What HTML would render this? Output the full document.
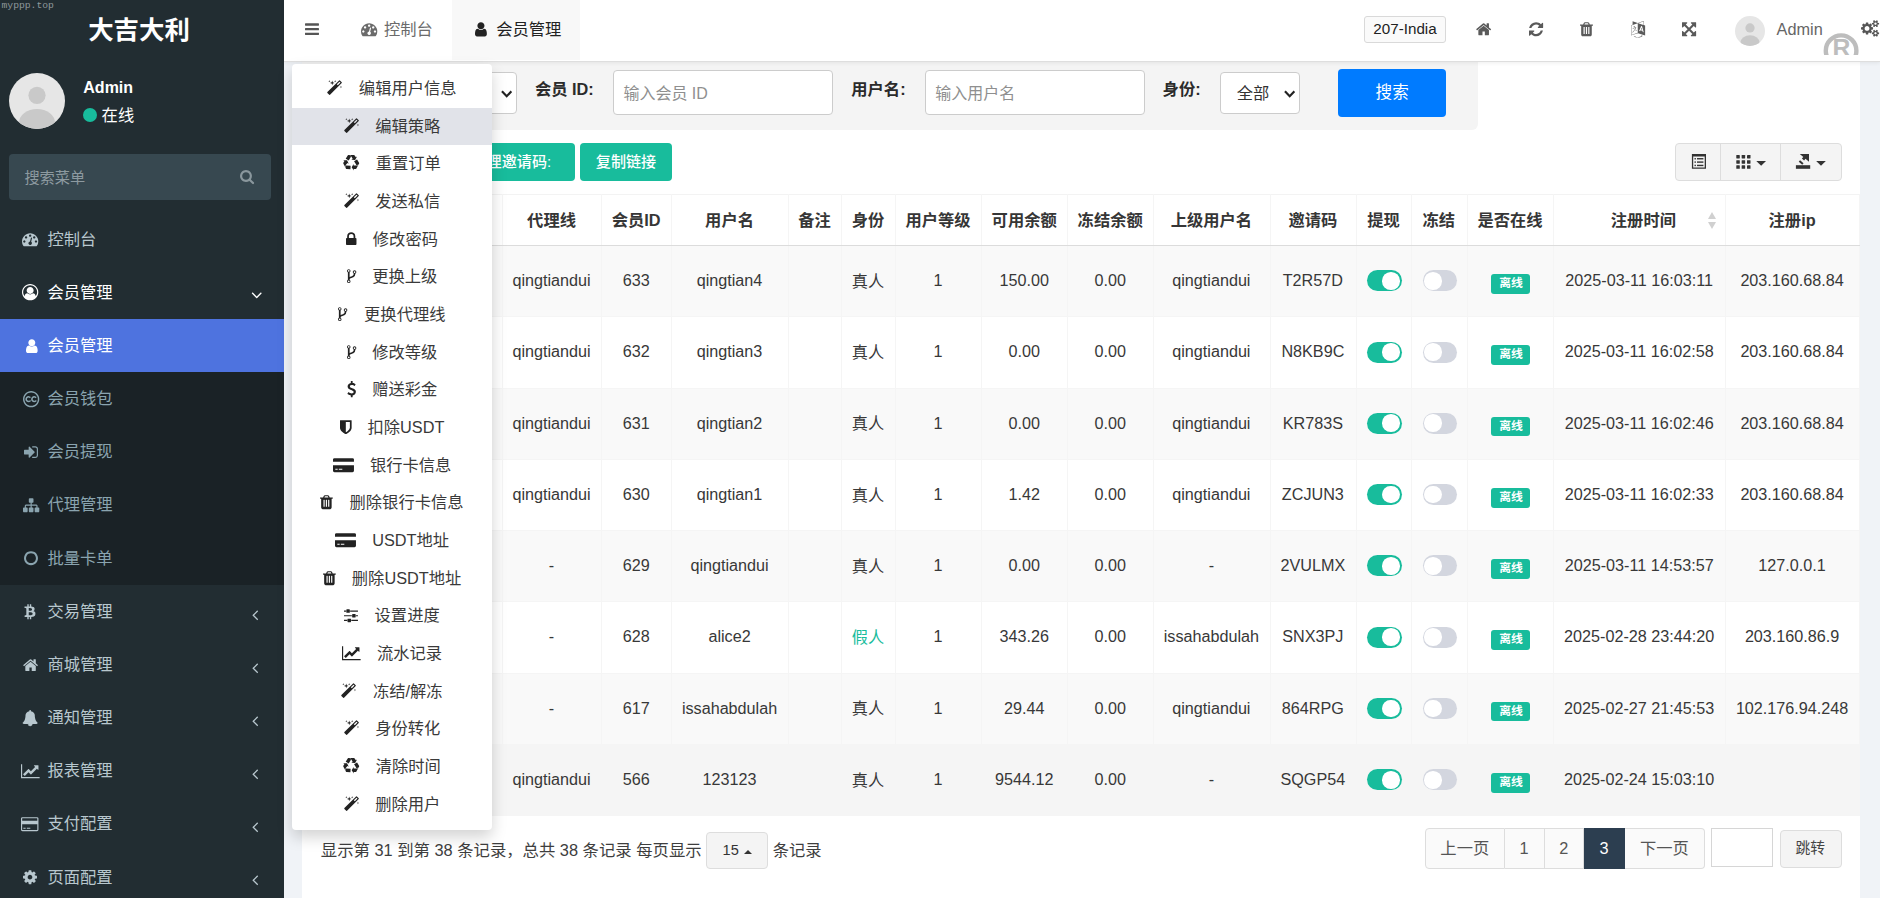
<!DOCTYPE html>
<html lang="zh-CN"><head><meta charset="utf-8"><title>大吉大利</title>
<style>
*{box-sizing:border-box}
html,body{margin:0;padding:0}
body{width:1880px;height:898px;overflow:hidden;position:relative;background:#f0f3f7;
 font-family:"Liberation Sans","Noto Sans CJK SC",sans-serif;font-size:16.3px;color:#333}
.fa{display:inline-block;fill:currentColor;overflow:visible}
ul{list-style:none;margin:0;padding:0}

/* sidebar */
#side{position:absolute;left:0;top:0;width:284px;height:898px;background:#222d32;overflow:hidden}
.wm{position:absolute;left:1.5px;top:-1px;font-family:"Liberation Mono",monospace;font-size:9.7px;line-height:14px;color:#8e979b;letter-spacing:0}
.logo{position:absolute;left:0;top:1.2px;width:278px;height:60px;line-height:59px;text-align:center;color:#fff;font-weight:bold;font-size:25.4px}
.avatar{position:absolute;left:9px;top:73px;width:56px;height:56px;border-radius:50%;overflow:hidden}
.avatar svg,.avatar2 svg{display:block}
.uname{position:absolute;left:83.3px;top:77.3px;line-height:22px;font-size:16px;font-weight:bold;color:#fff}
.ustat{position:absolute;left:83px;top:104px;line-height:22px;font-size:16.3px;color:#fff;padding-left:18.6px}
.ustat .dot{position:absolute;left:0;top:4.2px;width:14px;height:14px;border-radius:50%;background:#18bc9c}
.sform{position:absolute;left:9px;top:154px;width:262px;height:46px;background:#374850;border-radius:4px;line-height:46px;
 font-size:15.2px;color:#8d9aa0}
.sform span{position:absolute;left:15.4px;top:0.8px}
.menu{position:absolute;left:0;top:0;width:284px}
.mi{position:absolute;left:0;width:284px;height:53.17px;line-height:53.17px;color:#b8c7ce;font-size:16.3px}
.mi .mt{position:absolute;left:47.4px;top:0;white-space:nowrap}
.mi.open{color:#fff}
.mi.sub{background:#1a2226;color:#8aa4af}
.mi.sub.act{background:#4e73df;color:#fff}

/* header */
#hdr{position:absolute;left:0;top:0;width:1880px;height:61px;z-index:5}
#hdr>*{position:absolute}
#hdr::before{content:"";position:absolute;left:284px;top:0;right:0;height:61px;background:#fff;border-bottom:1px solid #dedede;box-shadow:0 1px 4px rgba(0,0,0,.07)}
.tab{top:0;height:60px;line-height:59px;white-space:nowrap;font-size:16.3px;color:#6b6b6b}
.tab.t1{left:340px;width:112px;padding-left:20.6px}
.tab.t2{left:452px;width:127.7px;background:#f8f8f8;color:#222;padding-left:23.4px}
.site{left:1364.4px;top:16.4px;width:81.3px;height:26.2px;line-height:24.5px;border:1px solid #d9d9d9;border-radius:3px;background:#fafafa;
 font-size:15.2px;color:#222;text-align:center}
.avatar2{left:1734.5px;top:16px;width:30px;height:30px;border-radius:50%;overflow:hidden}
.hadmin{left:1776.6px;top:18px;line-height:22px;font-size:16.3px;color:#666}
.regmark{left:1821.4px;top:30.85px}

/* panel */
#panel{position:absolute;left:302.4px;top:61px;width:1557.6px;height:837px;background:#fff}
#panel>*{position:absolute}
#panel{left:0;top:0;width:1880px;height:898px;background:none}
#panel::before{content:"";position:absolute;left:302.4px;top:61px;width:1557.6px;height:837px;background:#fff}
.band{left:302.4px;top:61px;width:1175.6px;height:69px;background:#f4f4f4;border-radius:0 0 6px 0}
.lb{top:78px;line-height:22px;font-weight:bold;font-size:16.3px;color:#2b2b2b;white-space:nowrap}
.inp{top:70.3px;width:219.4px;height:44.3px;border:1px solid #ccc;border-radius:4px;background:#fff;line-height:42px;font-size:16px;color:#8f8f8f}
.inp span{position:absolute;left:9px;top:1.3px;white-space:nowrap}
.sel{border:1px solid #ccc;border-radius:4px;background:#fff;font-size:16.3px;color:#333}
.sel.s0{left:322px;top:72.4px;width:194.8px;height:41.2px}
.sel.s1{left:1220.2px;top:72.4px;width:79.6px;height:41.2px;line-height:40.4px}
.sel span{position:absolute;left:15.5px;top:0}
.chev{position:absolute;right:3.9px;top:16.3px;width:11.4px;height:8px}
.btn-search{left:1337.9px;top:68.8px;width:108.5px;height:48.3px;line-height:48.6px;background:#007bff;border-radius:4px;color:#fff;text-align:center;font-size:16.6px}
.tbtn{top:143.3px;height:37.7px;line-height:37.8px;background:#18bc9c;border-radius:4px;color:#fff;text-align:center;font-size:15.1px;font-weight:500;white-space:nowrap;overflow:hidden}
.bgrp{left:1675.2px;top:143.1px;width:166.4px;height:37.5px;background:#f4f4f4;border:1px solid #ddd;border-radius:4px}
.bgrp div{position:absolute;top:0;bottom:0;width:1px;background:#ddd}
.bgrp .bg1{left:43.6px}
.bgrp .bg2{left:103.6px}
.caret{display:block;width:0;height:0;border-left:4.9px solid transparent;border-right:4.9px solid transparent;border-top:4.9px solid #333}
.caretup{display:inline-block;width:0;height:0;border-left:4.4px solid transparent;border-right:4.4px solid transparent;border-bottom:4.6px solid #333}

/* table */
.tb{left:322px;top:194px;width:1537px;table-layout:fixed;border-collapse:collapse;border-spacing:0;font-size:16.3px;color:#333}
.tb th,.tb td{padding:0 1.2px 0 0;text-align:center;white-space:nowrap;overflow:hidden;border-left:1px solid #f5f5f5;border-right:1px solid #f5f5f5}
.tb th{height:51px;padding-bottom:2.6px;font-weight:bold;border-top:1px solid #f3f3f3;border-bottom:1px solid #dcdcdc;color:#363636;position:relative;vertical-align:middle}
.tb td{height:71.29px;padding-bottom:1.4px;font-size:16.18px;color:#383838;border-top:1px solid #f5f5f5;vertical-align:middle}
.tb tr.odd td{background:#f9f9f9}
.tb tr.hov td{background:#f5f5f5;border-left-color:#f5f5f5;border-right-color:#f5f5f5}
.fake{color:#18bc9c}
.sw{left:1px;display:inline-block;position:relative;width:34.2px;height:21px;border-radius:11px;vertical-align:middle;top:0.2px}
.sw::after{content:"";position:absolute;top:1.7px;width:17.6px;height:17.6px;border-radius:50%;background:#fff}
.sw.on{background:#18bc9c}
.sw.on::after{right:1.7px}
.sw.off{background:#d3d6df}
.sw.off::after{left:1.7px}
.badge{left:1px;display:inline-block;position:relative;top:3px;width:39px;height:19.7px;line-height:19px;border-radius:3px;background:#18bc9c;color:#fff;font-weight:bold;font-size:11.8px;vertical-align:middle}
.srt{position:absolute;right:7px;top:17px;width:10px;height:17px}
.srt b{position:absolute;left:0;width:0;height:0;border-left:4.7px solid transparent;border-right:4.7px solid transparent}
.srt .u{top:0;border-bottom:7px solid #d0d0d0}
.srt .d{top:9.5px;border-top:7px solid #d0d0d0}

/* pagination */
.pinfo,.pinfo2{top:838.5px;line-height:22px;font-size:16.3px;color:#3e3e3e;white-space:nowrap}
.pinfo{left:320.8px;font-size:16.38px}
.pinfo2{left:772.8px}
.psize{left:706px;top:832.3px;width:62.3px;height:36.7px;line-height:35px;background:#f4f4f4;border:1px solid #ddd;border-radius:4px;font-size:14.6px;color:#333;text-align:center}
.psize span{margin-right:5px}
.psize .caretup{position:relative;top:-1.5px}
.pg{left:1425px;top:828.4px;height:40.3px;display:flex}
.pi{display:block;height:40.3px;line-height:38.5px;text-align:center;background:#fafafa;border:1px solid #ddd;border-left-width:0;color:#555;font-size:16.3px}
.pi.first{border-left-width:1px;border-radius:4px 0 0 4px}
.pi.last{border-radius:0 4px 4px 0}
.pi.act{background:#2c3e50;border-color:#2c3e50;color:#fff}
.jump{left:1711px;top:827.9px;width:61.7px;height:38.8px;border:1px solid #d6d6d6;background:#fff}
.jbtn{left:1780.4px;top:830.4px;width:61.3px;height:37.4px;line-height:35.5px;border:1px solid #ddd;border-radius:4px;background:#f4f4f4;color:#444;font-size:14.8px;text-align:center;text-indent:-1.6px}

/* dropdown */
#dd{z-index:10;position:absolute;left:292px;top:64px;width:200px;height:765.7px;padding:6px 0;background:#fff;border-radius:4px;
 box-shadow:0 7px 14.5px rgba(0,0,0,.175);border:0 solid rgba(0,0,0,.1)}
#dd li{height:37.68px;line-height:37.68px;text-align:center;white-space:nowrap;color:#3a3a3a;font-size:16.3px}
#dd li .fa{fill:#222}
#dd li.hv{background:#e1e3e9}

.gicons{left:1675px;top:143px}

.cj{position:relative;top:-0.7px}

</style></head>
<body>
<div id="side">
<div class="wm">myppp.top</div>
<div class="logo">大吉大利</div>
<div class="avatar"><svg viewBox="0 0 56 56" width="56" height="56"><rect width="56" height="56" fill="#e6e6e6"/><circle cx="28" cy="22.3" r="8.6" fill="#c9c9c9"/><ellipse cx="28" cy="50" rx="18" ry="14" fill="#c9c9c9"/></svg></div>
<div class="uname">Admin</div>
<div class="ustat"><i class="dot"></i>在线</div>
<div class="sform"><span>搜索菜单</span><svg class="fa" viewBox="0 0 1664 1792" style="width:14.11px;height:15.20px;position:absolute;left:231px;top:15.2px;fill:#8a979d"><path transform="translate(0,1536) scale(1,-1)" d="M1152 704q0 185 -131.5 316.5t-316.5 131.5t-316.5 -131.5t-131.5 -316.5t131.5 -316.5t316.5 -131.5t316.5 131.5t131.5 316.5zM1664 -128q0 -52 -38 -90t-90 -38q-54 0 -90 38l-343 342q-179 -124 -399 -124q-143 0 -273.5 55.5t-225 150t-150 225t-55.5 273.5
t55.5 273.5t150 225t225 150t273.5 55.5t273.5 -55.5t225 -150t150 -225t55.5 -273.5q0 -220 -124 -399l343 -343q37 -37 37 -90z"/></svg></div>
<ul class="menu">
<li class="mi top" style="top:212.50px"><svg class="fa" viewBox="0 0 1792 1792" style="width:16.30px;height:16.30px;position:absolute;left:22.05px;top:18.74px"><path transform="translate(0,1536) scale(1,-1)" d="M384 384q0 53 -37.5 90.5t-90.5 37.5t-90.5 -37.5t-37.5 -90.5t37.5 -90.5t90.5 -37.5t90.5 37.5t37.5 90.5zM576 832q0 53 -37.5 90.5t-90.5 37.5t-90.5 -37.5t-37.5 -90.5t37.5 -90.5t90.5 -37.5t90.5 37.5t37.5 90.5zM1004 351l101 382q6 26 -7.5 48.5t-38.5 29.5
t-48 -6.5t-30 -39.5l-101 -382q-60 -5 -107 -43.5t-63 -98.5q-20 -77 20 -146t117 -89t146 20t89 117q16 60 -6 117t-72 91zM1664 384q0 53 -37.5 90.5t-90.5 37.5t-90.5 -37.5t-37.5 -90.5t37.5 -90.5t90.5 -37.5t90.5 37.5t37.5 90.5zM1024 1024q0 53 -37.5 90.5
t-90.5 37.5t-90.5 -37.5t-37.5 -90.5t37.5 -90.5t90.5 -37.5t90.5 37.5t37.5 90.5zM1472 832q0 53 -37.5 90.5t-90.5 37.5t-90.5 -37.5t-37.5 -90.5t37.5 -90.5t90.5 -37.5t90.5 37.5t37.5 90.5zM1792 384q0 -261 -141 -483q-19 -29 -54 -29h-1402q-35 0 -54 29
q-141 221 -141 483q0 182 71 348t191 286t286 191t348 71t348 -71t286 -191t191 -286t71 -348z"/></svg><span class="mt">控制台</span></li>
<li class="mi top open" style="top:265.67px"><svg class="fa" viewBox="0 0 1792 1792" style="width:16.30px;height:16.30px;position:absolute;left:22.05px;top:18.74px"><path transform="translate(0,1536) scale(1,-1)" d="M896 1536q182 0 348 -71t286 -191t191 -286t71 -348q0 -181 -70.5 -347t-190.5 -286t-286 -191.5t-349 -71.5t-349 71t-285.5 191.5t-190.5 286t-71 347.5t71 348t191 286t286 191t348 71zM1515 185q149 205 149 455q0 156 -61 298t-164 245t-245 164t-298 61t-298 -61
t-245 -164t-164 -245t-61 -298q0 -250 149 -455q66 327 306 327q131 -128 313 -128t313 128q240 0 306 -327zM1280 832q0 159 -112.5 271.5t-271.5 112.5t-271.5 -112.5t-112.5 -271.5t112.5 -271.5t271.5 -112.5t271.5 112.5t112.5 271.5z"/></svg><span class="mt">会员管理</span><svg class="fa" viewBox="0 0 1152 1792" style="width:11.44px;height:17.80px;position:absolute;left:251.2px;top:20.29px"><path transform="translate(0,1536) scale(1,-1)" d="M1075 800q0 -13 -10 -23l-466 -466q-10 -10 -23 -10t-23 10l-466 466q-10 10 -10 23t10 23l50 50q10 10 23 10t23 -10l393 -393l393 393q10 10 23 10t23 -10l50 -50q10 -10 10 -23z"/></svg></li>
<li class="mi sub act" style="top:318.84px"><svg class="fa" viewBox="0 0 1280 1792" style="width:11.64px;height:16.30px;position:absolute;left:25.58px;top:18.74px"><path transform="translate(0,1536) scale(1,-1)" d="M1280 137q0 -109 -62.5 -187t-150.5 -78h-854q-88 0 -150.5 78t-62.5 187q0 85 8.5 160.5t31.5 152t58.5 131t94 89t134.5 34.5q131 -128 313 -128t313 128q76 0 134.5 -34.5t94 -89t58.5 -131t31.5 -152t8.5 -160.5zM1024 1024q0 -159 -112.5 -271.5t-271.5 -112.5
t-271.5 112.5t-112.5 271.5t112.5 271.5t271.5 112.5t271.5 -112.5t112.5 -271.5z"/></svg><span class="mt">会员管理</span></li>
<li class="mi sub" style="top:372.01px"><svg class="fa" viewBox="0 0 1792 1792" style="width:16.30px;height:16.30px;position:absolute;left:22.85px;top:18.74px"><path transform="translate(0,1536) scale(1,-1)" d="M605 303q153 0 257 104q14 18 3 36l-45 82q-6 13 -24 17q-16 2 -27 -11l-4 -3q-4 -4 -11.5 -10t-17.5 -13.5t-23.5 -14.5t-28.5 -13t-33.5 -9.5t-37.5 -3.5q-76 0 -125 50t-49 127q0 76 48 125.5t122 49.5q37 0 71.5 -14t50.5 -28l16 -14q11 -11 26 -10q16 2 24 14l53 78
q13 20 -2 39q-3 4 -11 12t-30 23.5t-48.5 28t-67.5 22.5t-86 10q-148 0 -246 -96.5t-98 -240.5q0 -146 97 -241.5t247 -95.5zM1235 303q153 0 257 104q14 18 4 36l-45 82q-8 14 -25 17q-16 2 -27 -11l-4 -3q-4 -4 -11.5 -10t-17.5 -13.5t-23.5 -14.5t-28.5 -13t-33.5 -9.5
t-37.5 -3.5q-76 0 -125 50t-49 127q0 76 48 125.5t122 49.5q37 0 71.5 -14t50.5 -28l16 -14q11 -11 26 -10q16 2 24 14l53 78q13 20 -2 39q-3 4 -11 12t-30 23.5t-48.5 28t-67.5 22.5t-86 10q-147 0 -245.5 -96.5t-98.5 -240.5q0 -146 97 -241.5t247 -95.5zM896 1376
q-150 0 -286 -58.5t-234.5 -157t-157 -234.5t-58.5 -286t58.5 -286t157 -234.5t234.5 -157t286 -58.5t286 58.5t234.5 157t157 234.5t58.5 286t-58.5 286t-157 234.5t-234.5 157t-286 58.5zM896 1536q182 0 348 -71t286 -191t191 -286t71 -348t-71 -348t-191 -286t-286 -191
t-348 -71t-348 71t-286 191t-191 286t-71 348t71 348t191 286t286 191t348 71z"/></svg><span class="mt">会员钱包</span></li>
<li class="mi sub" style="top:425.18px"><svg class="fa" viewBox="0 0 1536 1792" style="width:13.97px;height:16.30px;position:absolute;left:24.01px;top:18.74px"><path transform="translate(0,1536) scale(1,-1)" d="M1184 640q0 -26 -19 -45l-544 -544q-19 -19 -45 -19t-45 19t-19 45v288h-448q-26 0 -45 19t-19 45v384q0 26 19 45t45 19h448v288q0 26 19 45t45 19t45 -19l544 -544q19 -19 19 -45zM1536 992v-704q0 -119 -84.5 -203.5t-203.5 -84.5h-320q-13 0 -22.5 9.5t-9.5 22.5
q0 4 -1 20t-0.5 26.5t3 23.5t10 19.5t20.5 6.5h320q66 0 113 47t47 113v704q0 66 -47 113t-113 47h-288h-11h-13t-11.5 1t-11.5 3t-8 5.5t-7 9t-2 13.5q0 4 -1 20t-0.5 26.5t3 23.5t10 19.5t20.5 6.5h320q119 0 203.5 -84.5t84.5 -203.5z"/></svg><span class="mt">会员提现</span></li>
<li class="mi sub" style="top:478.35px"><svg class="fa" viewBox="0 0 1792 1792" style="width:16.30px;height:16.30px;position:absolute;left:22.85px;top:18.74px"><path transform="translate(0,1536) scale(1,-1)" d="M1792 288v-320q0 -40 -28 -68t-68 -28h-320q-40 0 -68 28t-28 68v320q0 40 28 68t68 28h96v192h-512v-192h96q40 0 68 -28t28 -68v-320q0 -40 -28 -68t-68 -28h-320q-40 0 -68 28t-28 68v320q0 40 28 68t68 28h96v192h-512v-192h96q40 0 68 -28t28 -68v-320
q0 -40 -28 -68t-68 -28h-320q-40 0 -68 28t-28 68v320q0 40 28 68t68 28h96v192q0 52 38 90t90 38h512v192h-96q-40 0 -68 28t-28 68v320q0 40 28 68t68 28h320q40 0 68 -28t28 -68v-320q0 -40 -28 -68t-68 -28h-96v-192h512q52 0 90 -38t38 -90v-192h96q40 0 68 -28t28 -68
z"/></svg><span class="mt">代理管理</span></li>
<li class="mi sub" style="top:531.52px"><svg class="fa" viewBox="0 0 1536 1792" style="width:13.97px;height:16.30px;position:absolute;left:24.01px;top:18.74px"><path transform="translate(0,1536) scale(1,-1)" d="M768 1184q-148 0 -273 -73t-198 -198t-73 -273t73 -273t198 -198t273 -73t273 73t198 198t73 273t-73 273t-198 198t-273 73zM1536 640q0 -209 -103 -385.5t-279.5 -279.5t-385.5 -103t-385.5 103t-279.5 279.5t-103 385.5t103 385.5t279.5 279.5t385.5 103t385.5 -103
t279.5 -279.5t103 -385.5z"/></svg><span class="mt">批量卡单</span></li>
<li class="mi top" style="top:584.69px"><svg class="fa" viewBox="0 0 1280 1792" style="width:11.64px;height:16.30px;position:absolute;left:24.38px;top:18.74px"><path transform="translate(0,1536) scale(1,-1)" d="M1167 896q18 -182 -131 -258q117 -28 175 -103t45 -214q-7 -71 -32.5 -125t-64.5 -89t-97 -58.5t-121.5 -34.5t-145.5 -15v-255h-154v251q-80 0 -122 1v-252h-154v255q-18 0 -54 0.5t-55 0.5h-200l31 183h111q50 0 58 51v402h16q-6 1 -16 1v287q-13 68 -89 68h-111v164
l212 -1q64 0 97 1v252h154v-247q82 2 122 2v245h154v-252q79 -7 140 -22.5t113 -45t82.5 -78t36.5 -114.5zM952 351q0 36 -15 64t-37 46t-57.5 30.5t-65.5 18.5t-74 9t-69 3t-64.5 -1t-47.5 -1v-338q8 0 37 -0.5t48 -0.5t53 1.5t58.5 4t57 8.5t55.5 14t47.5 21t39.5 30
t24.5 40t9.5 51zM881 827q0 33 -12.5 58.5t-30.5 42t-48 28t-55 16.5t-61.5 8t-58 2.5t-54 -1t-39.5 -0.5v-307q5 0 34.5 -0.5t46.5 0t50 2t55 5.5t51.5 11t48.5 18.5t37 27t27 38.5t9 51z"/></svg><span class="mt">交易管理</span><svg class="fa" viewBox="0 0 640 1792" style="width:6.21px;height:17.40px;position:absolute;left:252.36px;top:20.89px"><path transform="translate(0,1536) scale(1,-1)" d="M627 992q0 -13 -10 -23l-393 -393l393 -393q10 -10 10 -23t-10 -23l-50 -50q-10 -10 -23 -10t-23 10l-466 466q-10 10 -10 23t10 23l466 466q10 10 23 10t23 -10l50 -50q10 -10 10 -23z"/></svg></li>
<li class="mi top" style="top:637.86px"><svg class="fa" viewBox="0 0 1664 1792" style="width:15.14px;height:16.30px;position:absolute;left:22.63px;top:18.74px"><path transform="translate(0,1536) scale(1,-1)" d="M1408 544v-480q0 -26 -19 -45t-45 -19h-384v384h-256v-384h-384q-26 0 -45 19t-19 45v480q0 1 0.5 3t0.5 3l575 474l575 -474q1 -2 1 -6zM1631 613l-62 -74q-8 -9 -21 -11h-3q-13 0 -21 7l-692 577l-692 -577q-12 -8 -24 -7q-13 2 -21 11l-62 74q-8 10 -7 23.5t11 21.5
l719 599q32 26 76 26t76 -26l244 -204v195q0 14 9 23t23 9h192q14 0 23 -9t9 -23v-408l219 -182q10 -8 11 -21.5t-7 -23.5z"/></svg><span class="mt">商城管理</span><svg class="fa" viewBox="0 0 640 1792" style="width:6.21px;height:17.40px;position:absolute;left:252.36px;top:20.89px"><path transform="translate(0,1536) scale(1,-1)" d="M627 992q0 -13 -10 -23l-393 -393l393 -393q10 -10 10 -23t-10 -23l-50 -50q-10 -10 -23 -10t-23 10l-466 466q-10 10 -10 23t10 23l466 466q10 10 23 10t23 -10l50 -50q10 -10 10 -23z"/></svg></li>
<li class="mi top" style="top:691.03px"><svg class="fa" viewBox="0 0 1792 1792" style="width:16.30px;height:16.30px;position:absolute;left:22.05px;top:18.74px"><path transform="translate(0,1536) scale(1,-1)" d="M912 -160q0 16 -16 16q-59 0 -101.5 42.5t-42.5 101.5q0 16 -16 16t-16 -16q0 -73 51.5 -124.5t124.5 -51.5q16 0 16 16zM1728 128q0 -52 -38 -90t-90 -38h-448q0 -106 -75 -181t-181 -75t-181 75t-75 181h-448q-52 0 -90 38t-38 90q50 42 91 88t85 119.5t74.5 158.5
t50 206t19.5 260q0 152 117 282.5t307 158.5q-8 19 -8 39q0 40 28 68t68 28t68 -28t28 -68q0 -20 -8 -39q190 -28 307 -158.5t117 -282.5q0 -139 19.5 -260t50 -206t74.5 -158.5t85 -119.5t91 -88z"/></svg><span class="mt">通知管理</span><svg class="fa" viewBox="0 0 640 1792" style="width:6.21px;height:17.40px;position:absolute;left:252.36px;top:20.89px"><path transform="translate(0,1536) scale(1,-1)" d="M627 992q0 -13 -10 -23l-393 -393l393 -393q10 -10 10 -23t-10 -23l-50 -50q-10 -10 -23 -10t-23 10l-466 466q-10 10 -10 23t10 23l466 466q10 10 23 10t23 -10l50 -50q10 -10 10 -23z"/></svg></li>
<li class="mi top" style="top:744.20px"><svg class="fa" viewBox="0 0 2048 1792" style="width:18.63px;height:16.30px;position:absolute;left:20.89px;top:18.74px"><path transform="translate(0,1536) scale(1,-1)" d="M2048 0v-128h-2048v1536h128v-1408h1920zM1920 1248v-435q0 -21 -19.5 -29.5t-35.5 7.5l-121 121l-633 -633q-10 -10 -23 -10t-23 10l-233 233l-416 -416l-192 192l585 585q10 10 23 10t23 -10l233 -233l464 464l-121 121q-16 16 -7.5 35.5t29.5 19.5h435q14 0 23 -9
t9 -23z"/></svg><span class="mt">报表管理</span><svg class="fa" viewBox="0 0 640 1792" style="width:6.21px;height:17.40px;position:absolute;left:252.36px;top:20.89px"><path transform="translate(0,1536) scale(1,-1)" d="M627 992q0 -13 -10 -23l-393 -393l393 -393q10 -10 10 -23t-10 -23l-50 -50q-10 -10 -23 -10t-23 10l-466 466q-10 10 -10 23t10 23l466 466q10 10 23 10t23 -10l50 -50q10 -10 10 -23z"/></svg></li>
<li class="mi top" style="top:797.37px"><svg class="fa" viewBox="0 0 1920 1792" style="width:17.46px;height:16.30px;position:absolute;left:21.47px;top:18.74px"><path transform="translate(0,1536) scale(1,-1)" d="M1760 1408q66 0 113 -47t47 -113v-1216q0 -66 -47 -113t-113 -47h-1600q-66 0 -113 47t-47 113v1216q0 66 47 113t113 47h1600zM160 1280q-13 0 -22.5 -9.5t-9.5 -22.5v-224h1664v224q0 13 -9.5 22.5t-22.5 9.5h-1600zM1760 0q13 0 22.5 9.5t9.5 22.5v608h-1664v-608
q0 -13 9.5 -22.5t22.5 -9.5h1600zM256 128v128h256v-128h-256zM640 128v128h384v-128h-384z"/></svg><span class="mt">支付配置</span><svg class="fa" viewBox="0 0 640 1792" style="width:6.21px;height:17.40px;position:absolute;left:252.36px;top:20.89px"><path transform="translate(0,1536) scale(1,-1)" d="M627 992q0 -13 -10 -23l-393 -393l393 -393q10 -10 10 -23t-10 -23l-50 -50q-10 -10 -23 -10t-23 10l-466 466q-10 10 -10 23t10 23l466 466q10 10 23 10t23 -10l50 -50q10 -10 10 -23z"/></svg></li>
<li class="mi top" style="top:850.54px"><svg class="fa" viewBox="0 0 1536 1792" style="width:13.97px;height:16.30px;position:absolute;left:23.21px;top:18.74px"><path transform="translate(0,1536) scale(1,-1)" d="M1024 640q0 106 -75 181t-181 75t-181 -75t-75 -181t75 -181t181 -75t181 75t75 181zM1536 749v-222q0 -12 -8 -23t-20 -13l-185 -28q-19 -54 -39 -91q35 -50 107 -138q10 -12 10 -25t-9 -23q-27 -37 -99 -108t-94 -71q-12 0 -26 9l-138 108q-44 -23 -91 -38
q-16 -136 -29 -186q-7 -28 -36 -28h-222q-14 0 -24.5 8.5t-11.5 21.5l-28 184q-49 16 -90 37l-141 -107q-10 -9 -25 -9q-14 0 -25 11q-126 114 -165 168q-7 10 -7 23q0 12 8 23q15 21 51 66.5t54 70.5q-27 50 -41 99l-183 27q-13 2 -21 12.5t-8 23.5v222q0 12 8 23t19 13
l186 28q14 46 39 92q-40 57 -107 138q-10 12 -10 24q0 10 9 23q26 36 98.5 107.5t94.5 71.5q13 0 26 -10l138 -107q44 23 91 38q16 136 29 186q7 28 36 28h222q14 0 24.5 -8.5t11.5 -21.5l28 -184q49 -16 90 -37l142 107q9 9 24 9q13 0 25 -10q129 -119 165 -170q7 -8 7 -22
q0 -12 -8 -23q-15 -21 -51 -66.5t-54 -70.5q26 -50 41 -98l183 -28q13 -2 21 -12.5t8 -23.5z"/></svg><span class="mt">页面配置</span><svg class="fa" viewBox="0 0 640 1792" style="width:6.21px;height:17.40px;position:absolute;left:252.36px;top:20.89px"><path transform="translate(0,1536) scale(1,-1)" d="M627 992q0 -13 -10 -23l-393 -393l393 -393q10 -10 10 -23t-10 -23l-50 -50q-10 -10 -23 -10t-23 10l-466 466q-10 10 -10 23t10 23l466 466q10 10 23 10t23 -10l50 -50q10 -10 10 -23z"/></svg></li>
</ul>
</div>
<div id="hdr">
<svg class="fa" viewBox="0 0 1536 1792" style="width:13.97px;height:16.30px;position:absolute;left:304.66px;top:21.35px;fill:#555;"><path transform="translate(0,1536) scale(1,-1)" d="M1536 192v-128q0 -26 -19 -45t-45 -19h-1408q-26 0 -45 19t-19 45v128q0 26 19 45t45 19h1408q26 0 45 -19t19 -45zM1536 704v-128q0 -26 -19 -45t-45 -19h-1408q-26 0 -45 19t-19 45v128q0 26 19 45t45 19h1408q26 0 45 -19t19 -45zM1536 1216v-128q0 -26 -19 -45
t-45 -19h-1408q-26 0 -45 19t-19 45v128q0 26 19 45t45 19h1408q26 0 45 -19t19 -45z"/></svg><div class="tab t1"><svg class="fa" viewBox="0 0 1792 1792" style="width:16.30px;height:16.30px;vertical-align:-0.143em;margin-right:7px"><path transform="translate(0,1536) scale(1,-1)" d="M384 384q0 53 -37.5 90.5t-90.5 37.5t-90.5 -37.5t-37.5 -90.5t37.5 -90.5t90.5 -37.5t90.5 37.5t37.5 90.5zM576 832q0 53 -37.5 90.5t-90.5 37.5t-90.5 -37.5t-37.5 -90.5t37.5 -90.5t90.5 -37.5t90.5 37.5t37.5 90.5zM1004 351l101 382q6 26 -7.5 48.5t-38.5 29.5
t-48 -6.5t-30 -39.5l-101 -382q-60 -5 -107 -43.5t-63 -98.5q-20 -77 20 -146t117 -89t146 20t89 117q16 60 -6 117t-72 91zM1664 384q0 53 -37.5 90.5t-90.5 37.5t-90.5 -37.5t-37.5 -90.5t37.5 -90.5t90.5 -37.5t90.5 37.5t37.5 90.5zM1024 1024q0 53 -37.5 90.5
t-90.5 37.5t-90.5 -37.5t-37.5 -90.5t37.5 -90.5t90.5 -37.5t90.5 37.5t37.5 90.5zM1472 832q0 53 -37.5 90.5t-90.5 37.5t-90.5 -37.5t-37.5 -90.5t37.5 -90.5t90.5 -37.5t90.5 37.5t37.5 90.5zM1792 384q0 -261 -141 -483q-19 -29 -54 -29h-1402q-35 0 -54 29
q-141 221 -141 483q0 182 71 348t191 286t286 191t348 71t348 -71t286 -191t191 -286t71 -348z"/></svg><span>控制台</span></div>
<div class="tab t2"><svg class="fa" viewBox="0 0 1280 1792" style="width:11.86px;height:16.60px;vertical-align:-0.143em;margin-right:9px"><path transform="translate(0,1536) scale(1,-1)" d="M1280 137q0 -109 -62.5 -187t-150.5 -78h-854q-88 0 -150.5 78t-62.5 187q0 85 8.5 160.5t31.5 152t58.5 131t94 89t134.5 34.5q131 -128 313 -128t313 128q76 0 134.5 -34.5t94 -89t58.5 -131t31.5 -152t8.5 -160.5zM1024 1024q0 -159 -112.5 -271.5t-271.5 -112.5
t-271.5 112.5t-112.5 271.5t112.5 271.5t271.5 112.5t271.5 -112.5t112.5 -271.5z"/></svg><span>会员管理</span></div>
<div class="site">207-India</div>
<svg class="fa" viewBox="0 0 1664 1792" style="width:15.32px;height:16.50px;position:absolute;left:1476.34px;top:20.65px;fill:#5a5a5a;"><path transform="translate(0,1536) scale(1,-1)" d="M1408 544v-480q0 -26 -19 -45t-45 -19h-384v384h-256v-384h-384q-26 0 -45 19t-19 45v480q0 1 0.5 3t0.5 3l575 474l575 -474q1 -2 1 -6zM1631 613l-62 -74q-8 -9 -21 -11h-3q-13 0 -21 7l-692 577l-692 -577q-12 -8 -24 -7q-13 2 -21 11l-62 74q-8 10 -7 23.5t11 21.5
l719 599q32 26 76 26t76 -26l244 -204v195q0 14 9 23t23 9h192q14 0 23 -9t9 -23v-408l219 -182q10 -8 11 -21.5t-7 -23.5z"/></svg><svg class="fa" viewBox="0 0 1536 1792" style="width:14.14px;height:16.50px;position:absolute;left:1528.93px;top:20.65px;fill:#5a5a5a;"><path transform="translate(0,1536) scale(1,-1)" d="M1511 480q0 -5 -1 -7q-64 -268 -268 -434.5t-478 -166.5q-146 0 -282.5 55t-243.5 157l-129 -129q-19 -19 -45 -19t-45 19t-19 45v448q0 26 19 45t45 19h448q26 0 45 -19t19 -45t-19 -45l-137 -137q71 -66 161 -102t187 -36q134 0 250 65t186 179q11 17 53 117
q8 23 30 23h192q13 0 22.5 -9.5t9.5 -22.5zM1536 1280v-448q0 -26 -19 -45t-45 -19h-448q-26 0 -45 19t-19 45t19 45l138 138q-148 137 -349 137q-134 0 -250 -65t-186 -179q-11 -17 -53 -117q-8 -23 -30 -23h-199q-13 0 -22.5 9.5t-9.5 22.5v7q65 268 270 434.5t480 166.5
q146 0 284 -55.5t245 -156.5l130 129q19 19 45 19t45 -19t19 -45z"/></svg><svg class="fa" viewBox="0 0 1408 1792" style="width:12.96px;height:16.50px;position:absolute;left:1580.32px;top:20.65px;fill:#5a5a5a;"><path transform="translate(0,1536) scale(1,-1)" d="M512 160v704q0 14 -9 23t-23 9h-64q-14 0 -23 -9t-9 -23v-704q0 -14 9 -23t23 -9h64q14 0 23 9t9 23zM768 160v704q0 14 -9 23t-23 9h-64q-14 0 -23 -9t-9 -23v-704q0 -14 9 -23t23 -9h64q14 0 23 9t9 23zM1024 160v704q0 14 -9 23t-23 9h-64q-14 0 -23 -9t-9 -23v-704
q0 -14 9 -23t23 -9h64q14 0 23 9t9 23zM480 1152h448l-48 117q-7 9 -17 11h-317q-10 -2 -17 -11zM1408 1120v-64q0 -14 -9 -23t-23 -9h-96v-948q0 -83 -47 -143.5t-113 -60.5h-832q-66 0 -113 58.5t-47 141.5v952h-96q-14 0 -23 9t-9 23v64q0 14 9 23t23 9h309l70 167
q15 37 54 63t79 26h320q40 0 79 -26t54 -63l70 -167h309q14 0 23 -9t9 -23z"/></svg><svg class="fa" viewBox="0 0 1536 1792" style="width:14.14px;height:16.50px;position:absolute;left:1631.23px;top:20.65px;fill:#5a5a5a;"><path transform="translate(0,1536) scale(1,-1)" d="M654 458q-1 -3 -12.5 0.5t-31.5 11.5l-20 9q-44 20 -87 49q-7 5 -41 31.5t-38 28.5q-67 -103 -134 -181q-81 -95 -105 -110q-4 -2 -19.5 -4t-18.5 0q6 4 82 92q21 24 85.5 115t78.5 118q17 30 51 98.5t36 77.5q-8 1 -110 -33q-8 -2 -27.5 -7.5t-34.5 -9.5t-17 -5
q-2 -2 -2 -10.5t-1 -9.5q-5 -10 -31 -15q-23 -7 -47 0q-18 4 -28 21q-4 6 -5 23q6 2 24.5 5t29.5 6q58 16 105 32q100 35 102 35q10 2 43 19.5t44 21.5q9 3 21.5 8t14.5 5.5t6 -0.5q2 -12 -1 -33q0 -2 -12.5 -27t-26.5 -53.5t-17 -33.5q-25 -50 -77 -131l64 -28
q12 -6 74.5 -32t67.5 -28q4 -1 10.5 -25.5t4.5 -30.5zM449 944q3 -15 -4 -28q-12 -23 -50 -38q-30 -12 -60 -12q-26 3 -49 26q-14 15 -18 41l1 3q3 -3 19.5 -5t26.5 0t58 16q36 12 55 14q17 0 21 -17zM1147 815l63 -227l-139 42zM39 15l694 232v1032l-694 -233v-1031z
M1280 332l102 -31l-181 657l-100 31l-216 -536l102 -31l45 110l211 -65zM777 1294l573 -184v380zM1088 -29l158 -13l-54 -160l-40 66q-130 -83 -276 -108q-58 -12 -91 -12h-84q-79 0 -199.5 39t-183.5 85q-8 7 -8 16q0 8 5 13.5t13 5.5q4 0 18 -7.5t30.5 -16.5t20.5 -11
q73 -37 159.5 -61.5t157.5 -24.5q95 0 167 14.5t157 50.5q15 7 30.5 15.5t34 19t28.5 16.5zM1536 1050v-1079l-774 246q-14 -6 -375 -127.5t-368 -121.5q-13 0 -18 13q0 1 -1 3v1078q3 9 4 10q5 6 20 11q107 36 149 50v384l558 -198q2 0 160.5 55t316 108.5t161.5 53.5
q20 0 20 -21v-418z"/></svg><svg class="fa" viewBox="0 0 1536 1792" style="width:14.14px;height:16.50px;position:absolute;left:1681.93px;top:20.65px;fill:#5a5a5a;"><path transform="translate(0,1536) scale(1,-1)" d="M1283 995l-355 -355l355 -355l144 144q29 31 70 14q39 -17 39 -59v-448q0 -26 -19 -45t-45 -19h-448q-42 0 -59 40q-17 39 14 69l144 144l-355 355l-355 -355l144 -144q31 -30 14 -69q-17 -40 -59 -40h-448q-26 0 -45 19t-19 45v448q0 42 40 59q39 17 69 -14l144 -144
l355 355l-355 355l-144 -144q-19 -19 -45 -19q-12 0 -24 5q-40 17 -40 59v448q0 26 19 45t45 19h448q42 0 59 -40q17 -39 -14 -69l-144 -144l355 -355l355 355l-144 144q-31 30 -14 69q17 40 59 40h448q26 0 45 -19t19 -45v-448q0 -42 -39 -59q-13 -5 -25 -5q-26 0 -45 19z
"/></svg><div class="avatar2"><svg viewBox="0 0 56 56" width="30" height="30"><rect width="56" height="56" fill="#e6e6e6"/><circle cx="28" cy="22.3" r="8.6" fill="#c9c9c9"/><ellipse cx="28" cy="50" rx="18" ry="14" fill="#c9c9c9"/></svg></div>
<div class="hadmin">Admin</div>
<svg class="fa" viewBox="0 0 1920 1792" style="width:18.11px;height:16.90px;position:absolute;left:1860.6px;top:20.4px;fill:#555"><path transform="translate(0,1536) scale(1,-1)" d="M896 640q0 106 -75 181t-181 75t-181 -75t-75 -181t75 -181t181 -75t181 75t75 181zM1664 128q0 52 -38 90t-90 38t-90 -38t-38 -90q0 -53 37.5 -90.5t90.5 -37.5t90.5 37.5t37.5 90.5zM1664 1152q0 52 -38 90t-90 38t-90 -38t-38 -90q0 -53 37.5 -90.5t90.5 -37.5
t90.5 37.5t37.5 90.5zM1280 731v-185q0 -10 -7 -19.5t-16 -10.5l-155 -24q-11 -35 -32 -76q34 -48 90 -115q7 -11 7 -20q0 -12 -7 -19q-23 -30 -82.5 -89.5t-78.5 -59.5q-11 0 -21 7l-115 90q-37 -19 -77 -31q-11 -108 -23 -155q-7 -24 -30 -24h-186q-11 0 -20 7.5t-10 17.5
l-23 153q-34 10 -75 31l-118 -89q-7 -7 -20 -7q-11 0 -21 8q-144 133 -144 160q0 9 7 19q10 14 41 53t47 61q-23 44 -35 82l-152 24q-10 1 -17 9.5t-7 19.5v185q0 10 7 19.5t16 10.5l155 24q11 35 32 76q-34 48 -90 115q-7 11 -7 20q0 12 7 20q22 30 82 89t79 59q11 0 21 -7
l115 -90q34 18 77 32q11 108 23 154q7 24 30 24h186q11 0 20 -7.5t10 -17.5l23 -153q34 -10 75 -31l118 89q8 7 20 7q11 0 21 -8q144 -133 144 -160q0 -8 -7 -19q-12 -16 -42 -54t-45 -60q23 -48 34 -82l152 -23q10 -2 17 -10.5t7 -19.5zM1920 198v-140q0 -16 -149 -31
q-12 -27 -30 -52q51 -113 51 -138q0 -4 -4 -7q-122 -71 -124 -71q-8 0 -46 47t-52 68q-20 -2 -30 -2t-30 2q-14 -21 -52 -68t-46 -47q-2 0 -124 71q-4 3 -4 7q0 25 51 138q-18 25 -30 52q-149 15 -149 31v140q0 16 149 31q13 29 30 52q-51 113 -51 138q0 4 4 7q4 2 35 20
t59 34t30 16q8 0 46 -46.5t52 -67.5q20 2 30 2t30 -2q51 71 92 112l6 2q4 0 124 -70q4 -3 4 -7q0 -25 -51 -138q17 -23 30 -52q149 -15 149 -31zM1920 1222v-140q0 -16 -149 -31q-12 -27 -30 -52q51 -113 51 -138q0 -4 -4 -7q-122 -71 -124 -71q-8 0 -46 47t-52 68
q-20 -2 -30 -2t-30 2q-14 -21 -52 -68t-46 -47q-2 0 -124 71q-4 3 -4 7q0 25 51 138q-18 25 -30 52q-149 15 -149 31v140q0 16 149 31q13 29 30 52q-51 113 -51 138q0 4 4 7q4 2 35 20t59 34t30 16q8 0 46 -46.5t52 -67.5q20 2 30 2t30 -2q51 71 92 112l6 2q4 0 124 -70
q4 -3 4 -7q0 -25 -51 -138q17 -23 30 -52q149 -15 149 -31z"/></svg><svg class="regmark" viewBox="0 0 40 24" width="40" height="24"><circle cx="20.1" cy="19.65" r="15.3" fill="none" stroke="#bdbdbd" stroke-width="4.4"/><text x="20.3" y="25.3" text-anchor="middle" font-family="Liberation Sans, sans-serif" font-weight="bold" font-size="24.7" fill="#bdbdbd">R</text></svg>
</div>
<div id="panel">
<div class="band"></div>
<div class="sel s0"><svg class="chev" viewBox="0 0 12 8"><path d="M1 1.2 L6 6.3 L11 1.2" fill="none" stroke="#222" stroke-width="2.3"/></svg></div>
<label class="lb" style="left:535px">会员 ID:</label>
<div class="inp" style="left:613.4px"><span>输入会员 ID</span></div>
<label class="lb" style="left:851.3px">用户名:</label>
<div class="inp" style="left:925.3px"><span>输入用户名</span></div>
<label class="lb" style="left:1162.6px">身份:</label>
<div class="sel s1"><span>全部</span><svg class="chev" viewBox="0 0 12 8"><path d="M1 1.2 L6 6.3 L11 1.2" fill="none" stroke="#222" stroke-width="2.3"/></svg></div>
<div class="btn-search">搜索</div>
<div class="tbtn" style="left:322px;width:129px">&nbsp;</div>
<div class="tbtn" style="left:458.6px;width:116.2px;text-align:right;padding-right:0"><span style="margin-right:23.6px">代理邀请码:</span></div>
<div class="tbtn" style="left:580px;width:92px">复制链接</div>
<div class="bgrp"><div class="bg1"></div><div class="bg2"></div></div>
<svg class="gicons" viewBox="1675 143 167 38" width="167" height="38" fill="#333"><path fill-rule="evenodd" d="M1691.9 153.9h14.1v14.9h-14.1z M1693.2 156.5v11h11.5v-11z"/><rect x="1694.5" y="158.05" width="1.4" height="1.4"/><rect x="1697" y="158.05" width="6.4" height="1.4"/><rect x="1694.5" y="161.40" width="1.4" height="1.4"/><rect x="1697" y="161.40" width="6.4" height="1.4"/><rect x="1694.5" y="164.75" width="1.4" height="1.4"/><rect x="1697" y="164.75" width="6.4" height="1.4"/><rect x="1736.3" y="155.0" width="3.5" height="3.5" rx="0.4"/><rect x="1736.3" y="160.15" width="3.5" height="3.5" rx="0.4"/><rect x="1736.3" y="165.3" width="3.5" height="3.5" rx="0.4"/><rect x="1741.65" y="155.0" width="3.5" height="3.5" rx="0.4"/><rect x="1741.65" y="160.15" width="3.5" height="3.5" rx="0.4"/><rect x="1741.65" y="165.3" width="3.5" height="3.5" rx="0.4"/><rect x="1747.0" y="155.0" width="3.5" height="3.5" rx="0.4"/><rect x="1747.0" y="160.15" width="3.5" height="3.5" rx="0.4"/><rect x="1747.0" y="165.3" width="3.5" height="3.5" rx="0.4"/><path d="M1756.3 161h9.7l-4.85 4.8z"/><path d="M1816.2 161h9.6l-4.8 4.8z"/><rect x="1795.9" y="165.2" width="14.3" height="3.6"/><path d="M1799.8 153.9H1809V161.8L1805.5 158.8L1804.1 160.5L1801.9 158.6L1803.3 156.9Z"/><path d="M1798.75 161.66L1800.05 160.14L1803.55 163.14L1802.25 164.66Z"/></svg>
<table class="tb"><colgroup><col style="width:180.00px"><col style="width:99.25px"><col style="width:70.00px"><col style="width:116.75px"><col style="width:53.25px"><col style="width:53.75px"><col style="width:86.25px"><col style="width:86.05px"><col style="width:85.95px"><col style="width:116.45px"><col style="width:86.55px"><col style="width:54.65px"><col style="width:56.10px"><col style="width:86.20px"><col style="width:172.30px"><col style="width:133.50px"></colgroup>
<thead><tr><th></th><th>代理线</th><th>会员ID</th><th>用户名</th><th>备注</th><th>身份</th><th>用户等级</th><th>可用余额</th><th>冻结余额</th><th>上级用户名</th><th>邀请码</th><th>提现</th><th>冻结</th><th>是否在线</th><th class="sortable"><span style="position:relative;left:4.2px">注册时间</span><i class="srt"><b class="u"></b><b class="d"></b></i></th><th>注册ip</th></tr></thead>
<tbody>
<tr class="odd"><td></td><td>qingtiandui</td><td>633</td><td>qingtian4</td><td></td><td><span class="cj">真人</span></td><td>1</td><td>150.00</td><td>0.00</td><td>qingtiandui</td><td>T2R57D</td><td><i class="sw on"></i></td><td><i class="sw off"></i></td><td><span class="badge">离线</span></td><td>2025-03-11 16:03:11</td><td>203.160.68.84</td></tr>
<tr class="even"><td></td><td>qingtiandui</td><td>632</td><td>qingtian3</td><td></td><td><span class="cj">真人</span></td><td>1</td><td>0.00</td><td>0.00</td><td>qingtiandui</td><td>N8KB9C</td><td><i class="sw on"></i></td><td><i class="sw off"></i></td><td><span class="badge">离线</span></td><td>2025-03-11 16:02:58</td><td>203.160.68.84</td></tr>
<tr class="odd"><td></td><td>qingtiandui</td><td>631</td><td>qingtian2</td><td></td><td><span class="cj">真人</span></td><td>1</td><td>0.00</td><td>0.00</td><td>qingtiandui</td><td>KR783S</td><td><i class="sw on"></i></td><td><i class="sw off"></i></td><td><span class="badge">离线</span></td><td>2025-03-11 16:02:46</td><td>203.160.68.84</td></tr>
<tr class="even"><td></td><td>qingtiandui</td><td>630</td><td>qingtian1</td><td></td><td><span class="cj">真人</span></td><td>1</td><td>1.42</td><td>0.00</td><td>qingtiandui</td><td>ZCJUN3</td><td><i class="sw on"></i></td><td><i class="sw off"></i></td><td><span class="badge">离线</span></td><td>2025-03-11 16:02:33</td><td>203.160.68.84</td></tr>
<tr class="odd"><td></td><td>-</td><td>629</td><td>qingtiandui</td><td></td><td><span class="cj">真人</span></td><td>1</td><td>0.00</td><td>0.00</td><td>-</td><td>2VULMX</td><td><i class="sw on"></i></td><td><i class="sw off"></i></td><td><span class="badge">离线</span></td><td>2025-03-11 14:53:57</td><td>127.0.0.1</td></tr>
<tr class="even"><td></td><td>-</td><td>628</td><td>alice2</td><td></td><td><span class="fake cj">假人</span></td><td>1</td><td>343.26</td><td>0.00</td><td>issahabdulah</td><td>SNX3PJ</td><td><i class="sw on"></i></td><td><i class="sw off"></i></td><td><span class="badge">离线</span></td><td>2025-02-28 23:44:20</td><td>203.160.86.9</td></tr>
<tr class="odd"><td></td><td>-</td><td>617</td><td>issahabdulah</td><td></td><td><span class="cj">真人</span></td><td>1</td><td>29.44</td><td>0.00</td><td>qingtiandui</td><td>864RPG</td><td><i class="sw on"></i></td><td><i class="sw off"></i></td><td><span class="badge">离线</span></td><td>2025-02-27 21:45:53</td><td>102.176.94.248</td></tr>
<tr class="hov"><td></td><td>qingtiandui</td><td>566</td><td>123123</td><td></td><td><span class="cj">真人</span></td><td>1</td><td>9544.12</td><td>0.00</td><td>-</td><td>SQGP54</td><td><i class="sw on"></i></td><td><i class="sw off"></i></td><td><span class="badge">离线</span></td><td>2025-02-24 15:03:10</td><td></td></tr>
</tbody></table>
<div class="pinfo">显示第 31 到第 38 条记录，总共 38 条记录 每页显示</div>
<div class="psize"><span>15</span><i class="caretup"></i></div>
<div class="pinfo2">条记录</div>
<div class="pg"><span class="pi first" style="width:79.6px">上一页</span><span class="pi" style="width:40.1px">1</span><span class="pi" style="width:39.4px">2</span><span class="pi act" style="width:41px">3</span><span class="pi last" style="width:79.5px">下一页</span></div>
<div class="jump"></div>
<div class="jbtn">跳转</div>
</div>
<ul id="dd">
<li><svg class="fa" viewBox="0 0 1664 1792" style="width:15.14px;height:16.30px;vertical-align:-0.143em;margin-right:16.3px"><path transform="translate(0,1536) scale(1,-1)" d="M1190 955l293 293l-107 107l-293 -293zM1637 1248q0 -27 -18 -45l-1286 -1286q-18 -18 -45 -18t-45 18l-198 198q-18 18 -18 45t18 45l1286 1286q18 18 45 18t45 -18l198 -198q18 -18 18 -45zM286 1438l98 -30l-98 -30l-30 -98l-30 98l-98 30l98 30l30 98zM636 1276
l196 -60l-196 -60l-60 -196l-60 196l-196 60l196 60l60 196zM1566 798l98 -30l-98 -30l-30 -98l-30 98l-98 30l98 30l30 98zM926 1438l98 -30l-98 -30l-30 -98l-30 98l-98 30l98 30l30 98z"/></svg><span>编辑用户信息</span></li>
<li class="hv"><svg class="fa" viewBox="0 0 1664 1792" style="width:15.14px;height:16.30px;vertical-align:-0.143em;margin-right:16.3px"><path transform="translate(0,1536) scale(1,-1)" d="M1190 955l293 293l-107 107l-293 -293zM1637 1248q0 -27 -18 -45l-1286 -1286q-18 -18 -45 -18t-45 18l-198 198q-18 18 -18 45t18 45l1286 1286q18 18 45 18t45 -18l198 -198q18 -18 18 -45zM286 1438l98 -30l-98 -30l-30 -98l-30 98l-98 30l98 30l30 98zM636 1276
l196 -60l-196 -60l-60 -196l-60 196l-196 60l196 60l60 196zM1566 798l98 -30l-98 -30l-30 -98l-30 98l-98 30l98 30l30 98zM926 1438l98 -30l-98 -30l-30 -98l-30 98l-98 30l98 30l30 98z"/></svg><span>编辑策略</span></li>
<li><svg class="fa" viewBox="0 0 1792 1792" style="width:16.30px;height:16.30px;vertical-align:-0.143em;margin-right:16.3px"><path transform="translate(0,1536) scale(1,-1)" d="M836 367l-15 -368l-2 -22l-420 29q-36 3 -67 31.5t-47 65.5q-11 27 -14.5 55t4 65t12 55t21.5 64t19 53q78 -12 509 -28zM449 953l180 -379l-147 92q-63 -72 -111.5 -144.5t-72.5 -125t-39.5 -94.5t-18.5 -63l-4 -21l-190 357q-17 26 -18 56t6 47l8 18q35 63 114 188
l-140 86zM1680 436l-188 -359q-12 -29 -36.5 -46.5t-43.5 -20.5l-18 -4q-71 -7 -219 -12l8 -164l-230 367l211 362l7 -173q170 -16 283 -5t170 33zM895 1360q-47 -63 -265 -435l-317 187l-19 12l225 356q20 31 60 45t80 10q24 -2 48.5 -12t42 -21t41.5 -33t36 -34.5
t36 -39.5t32 -35zM1550 1053l212 -363q18 -37 12.5 -76t-27.5 -74q-13 -20 -33 -37t-38 -28t-48.5 -22t-47 -16t-51.5 -14t-46 -12q-34 72 -265 436l313 195zM1407 1279l142 83l-220 -373l-419 20l151 86q-34 89 -75 166t-75.5 123.5t-64.5 80t-47 46.5l-17 13l405 -1
q31 3 58 -10.5t39 -28.5l11 -15q39 -61 112 -190z"/></svg><span>重置订单</span></li>
<li><svg class="fa" viewBox="0 0 1664 1792" style="width:15.14px;height:16.30px;vertical-align:-0.143em;margin-right:16.3px"><path transform="translate(0,1536) scale(1,-1)" d="M1190 955l293 293l-107 107l-293 -293zM1637 1248q0 -27 -18 -45l-1286 -1286q-18 -18 -45 -18t-45 18l-198 198q-18 18 -18 45t18 45l1286 1286q18 18 45 18t45 -18l198 -198q18 -18 18 -45zM286 1438l98 -30l-98 -30l-30 -98l-30 98l-98 30l98 30l30 98zM636 1276
l196 -60l-196 -60l-60 -196l-60 196l-196 60l196 60l60 196zM1566 798l98 -30l-98 -30l-30 -98l-30 98l-98 30l98 30l30 98zM926 1438l98 -30l-98 -30l-30 -98l-30 98l-98 30l98 30l30 98z"/></svg><span>发送私信</span></li>
<li><svg class="fa" viewBox="0 0 1152 1792" style="width:10.48px;height:16.30px;vertical-align:-0.143em;margin-right:16.3px"><path transform="translate(0,1536) scale(1,-1)" d="M320 768h512v192q0 106 -75 181t-181 75t-181 -75t-75 -181v-192zM1152 672v-576q0 -40 -28 -68t-68 -28h-960q-40 0 -68 28t-28 68v576q0 40 28 68t68 28h32v192q0 184 132 316t316 132t316 -132t132 -316v-192h32q40 0 68 -28t28 -68z"/></svg><span>修改密码</span></li>
<li><svg class="fa" viewBox="0 0 1024 1792" style="width:9.31px;height:16.30px;vertical-align:-0.143em;margin-right:16.3px"><path transform="translate(0,1536) scale(1,-1)" d="M288 64q0 40 -28 68t-68 28t-68 -28t-28 -68t28 -68t68 -28t68 28t28 68zM288 1216q0 40 -28 68t-68 28t-68 -28t-28 -68t28 -68t68 -28t68 28t28 68zM928 1088q0 40 -28 68t-68 28t-68 -28t-28 -68t28 -68t68 -28t68 28t28 68zM1024 1088q0 -52 -26 -96.5t-70 -69.5
q-2 -287 -226 -414q-67 -38 -203 -81q-128 -40 -169.5 -71t-41.5 -100v-26q44 -25 70 -69.5t26 -96.5q0 -80 -56 -136t-136 -56t-136 56t-56 136q0 52 26 96.5t70 69.5v820q-44 25 -70 69.5t-26 96.5q0 80 56 136t136 56t136 -56t56 -136q0 -52 -26 -96.5t-70 -69.5v-497
q54 26 154 57q55 17 87.5 29.5t70.5 31t59 39.5t40.5 51t28 69.5t8.5 91.5q-44 25 -70 69.5t-26 96.5q0 80 56 136t136 56t136 -56t56 -136z"/></svg><span>更换上级</span></li>
<li><svg class="fa" viewBox="0 0 1024 1792" style="width:9.31px;height:16.30px;vertical-align:-0.143em;margin-right:16.3px"><path transform="translate(0,1536) scale(1,-1)" d="M288 64q0 40 -28 68t-68 28t-68 -28t-28 -68t28 -68t68 -28t68 28t28 68zM288 1216q0 40 -28 68t-68 28t-68 -28t-28 -68t28 -68t68 -28t68 28t28 68zM928 1088q0 40 -28 68t-68 28t-68 -28t-28 -68t28 -68t68 -28t68 28t28 68zM1024 1088q0 -52 -26 -96.5t-70 -69.5
q-2 -287 -226 -414q-67 -38 -203 -81q-128 -40 -169.5 -71t-41.5 -100v-26q44 -25 70 -69.5t26 -96.5q0 -80 -56 -136t-136 -56t-136 56t-56 136q0 52 26 96.5t70 69.5v820q-44 25 -70 69.5t-26 96.5q0 80 56 136t136 56t136 -56t56 -136q0 -52 -26 -96.5t-70 -69.5v-497
q54 26 154 57q55 17 87.5 29.5t70.5 31t59 39.5t40.5 51t28 69.5t8.5 91.5q-44 25 -70 69.5t-26 96.5q0 80 56 136t136 56t136 -56t56 -136z"/></svg><span>更换代理线</span></li>
<li><svg class="fa" viewBox="0 0 1024 1792" style="width:9.31px;height:16.30px;vertical-align:-0.143em;margin-right:16.3px"><path transform="translate(0,1536) scale(1,-1)" d="M288 64q0 40 -28 68t-68 28t-68 -28t-28 -68t28 -68t68 -28t68 28t28 68zM288 1216q0 40 -28 68t-68 28t-68 -28t-28 -68t28 -68t68 -28t68 28t28 68zM928 1088q0 40 -28 68t-68 28t-68 -28t-28 -68t28 -68t68 -28t68 28t28 68zM1024 1088q0 -52 -26 -96.5t-70 -69.5
q-2 -287 -226 -414q-67 -38 -203 -81q-128 -40 -169.5 -71t-41.5 -100v-26q44 -25 70 -69.5t26 -96.5q0 -80 -56 -136t-136 -56t-136 56t-56 136q0 52 26 96.5t70 69.5v820q-44 25 -70 69.5t-26 96.5q0 80 56 136t136 56t136 -56t56 -136q0 -52 -26 -96.5t-70 -69.5v-497
q54 26 154 57q55 17 87.5 29.5t70.5 31t59 39.5t40.5 51t28 69.5t8.5 91.5q-44 25 -70 69.5t-26 96.5q0 80 56 136t136 56t136 -56t56 -136z"/></svg><span>修改等级</span></li>
<li><svg class="fa" viewBox="0 0 1024 1792" style="width:9.31px;height:16.30px;vertical-align:-0.143em;margin-right:16.3px"><path transform="translate(0,1536) scale(1,-1)" d="M978 351q0 -153 -99.5 -263.5t-258.5 -136.5v-175q0 -14 -9 -23t-23 -9h-135q-13 0 -22.5 9.5t-9.5 22.5v175q-66 9 -127.5 31t-101.5 44.5t-74 48t-46.5 37.5t-17.5 18q-17 21 -2 41l103 135q7 10 23 12q15 2 24 -9l2 -2q113 -99 243 -125q37 -8 74 -8q81 0 142.5 43
t61.5 122q0 28 -15 53t-33.5 42t-58.5 37.5t-66 32t-80 32.5q-39 16 -61.5 25t-61.5 26.5t-62.5 31t-56.5 35.5t-53.5 42.5t-43.5 49t-35.5 58t-21 66.5t-8.5 78q0 138 98 242t255 134v180q0 13 9.5 22.5t22.5 9.5h135q14 0 23 -9t9 -23v-176q57 -6 110.5 -23t87 -33.5
t63.5 -37.5t39 -29t15 -14q17 -18 5 -38l-81 -146q-8 -15 -23 -16q-14 -3 -27 7q-3 3 -14.5 12t-39 26.5t-58.5 32t-74.5 26t-85.5 11.5q-95 0 -155 -43t-60 -111q0 -26 8.5 -48t29.5 -41.5t39.5 -33t56 -31t60.5 -27t70 -27.5q53 -20 81 -31.5t76 -35t75.5 -42.5t62 -50
t53 -63.5t31.5 -76.5t13 -94z"/></svg><span>赠送彩金</span></li>
<li><svg class="fa" viewBox="0 0 1280 1792" style="width:11.64px;height:16.30px;vertical-align:-0.143em;margin-right:16.3px"><path transform="translate(0,1536) scale(1,-1)" d="M1088 576v640h-448v-1137q119 63 213 137q235 184 235 360zM1280 1344v-768q0 -86 -33.5 -170.5t-83 -150t-118 -127.5t-126.5 -103t-121 -77.5t-89.5 -49.5t-42.5 -20q-12 -6 -26 -6t-26 6q-16 7 -42.5 20t-89.5 49.5t-121 77.5t-126.5 103t-118 127.5t-83 150
t-33.5 170.5v768q0 26 19 45t45 19h1152q26 0 45 -19t19 -45z"/></svg><span>扣除USDT</span></li>
<li><svg class="fa" viewBox="0 0 2304 1792" style="width:20.96px;height:16.30px;vertical-align:-0.143em;margin-right:16.3px"><path transform="translate(0,1536) scale(1,-1)" d="M0 32v608h2304v-608q0 -66 -47 -113t-113 -47h-1984q-66 0 -113 47t-47 113zM640 256v-128h384v128h-384zM256 256v-128h256v128h-256zM2144 1408q66 0 113 -47t47 -113v-224h-2304v224q0 66 47 113t113 47h1984z"/></svg><span>银行卡信息</span></li>
<li><svg class="fa" viewBox="0 0 1408 1792" style="width:12.81px;height:16.30px;vertical-align:-0.143em;margin-right:16.3px"><path transform="translate(0,1536) scale(1,-1)" d="M512 160v704q0 14 -9 23t-23 9h-64q-14 0 -23 -9t-9 -23v-704q0 -14 9 -23t23 -9h64q14 0 23 9t9 23zM768 160v704q0 14 -9 23t-23 9h-64q-14 0 -23 -9t-9 -23v-704q0 -14 9 -23t23 -9h64q14 0 23 9t9 23zM1024 160v704q0 14 -9 23t-23 9h-64q-14 0 -23 -9t-9 -23v-704
q0 -14 9 -23t23 -9h64q14 0 23 9t9 23zM480 1152h448l-48 117q-7 9 -17 11h-317q-10 -2 -17 -11zM1408 1120v-64q0 -14 -9 -23t-23 -9h-96v-948q0 -83 -47 -143.5t-113 -60.5h-832q-66 0 -113 58.5t-47 141.5v952h-96q-14 0 -23 9t-9 23v64q0 14 9 23t23 9h309l70 167
q15 37 54 63t79 26h320q40 0 79 -26t54 -63l70 -167h309q14 0 23 -9t9 -23z"/></svg><span>删除银行卡信息</span></li>
<li><svg class="fa" viewBox="0 0 2304 1792" style="width:20.96px;height:16.30px;vertical-align:-0.143em;margin-right:16.3px"><path transform="translate(0,1536) scale(1,-1)" d="M0 32v608h2304v-608q0 -66 -47 -113t-113 -47h-1984q-66 0 -113 47t-47 113zM640 256v-128h384v128h-384zM256 256v-128h256v128h-256zM2144 1408q66 0 113 -47t47 -113v-224h-2304v224q0 66 47 113t113 47h1984z"/></svg><span>USDT地址</span></li>
<li><svg class="fa" viewBox="0 0 1408 1792" style="width:12.81px;height:16.30px;vertical-align:-0.143em;margin-right:16.3px"><path transform="translate(0,1536) scale(1,-1)" d="M512 160v704q0 14 -9 23t-23 9h-64q-14 0 -23 -9t-9 -23v-704q0 -14 9 -23t23 -9h64q14 0 23 9t9 23zM768 160v704q0 14 -9 23t-23 9h-64q-14 0 -23 -9t-9 -23v-704q0 -14 9 -23t23 -9h64q14 0 23 9t9 23zM1024 160v704q0 14 -9 23t-23 9h-64q-14 0 -23 -9t-9 -23v-704
q0 -14 9 -23t23 -9h64q14 0 23 9t9 23zM480 1152h448l-48 117q-7 9 -17 11h-317q-10 -2 -17 -11zM1408 1120v-64q0 -14 -9 -23t-23 -9h-96v-948q0 -83 -47 -143.5t-113 -60.5h-832q-66 0 -113 58.5t-47 141.5v952h-96q-14 0 -23 9t-9 23v64q0 14 9 23t23 9h309l70 167
q15 37 54 63t79 26h320q40 0 79 -26t54 -63l70 -167h309q14 0 23 -9t9 -23z"/></svg><span>删除USDT地址</span></li>
<li><svg class="fa" viewBox="0 0 1536 1792" style="width:13.97px;height:16.30px;vertical-align:-0.143em;margin-right:16.3px"><path transform="translate(0,1536) scale(1,-1)" d="M352 128v-128h-352v128h352zM704 256q26 0 45 -19t19 -45v-256q0 -26 -19 -45t-45 -19h-256q-26 0 -45 19t-19 45v256q0 26 19 45t45 19h256zM864 640v-128h-864v128h864zM224 1152v-128h-224v128h224zM1536 128v-128h-736v128h736zM576 1280q26 0 45 -19t19 -45v-256
q0 -26 -19 -45t-45 -19h-256q-26 0 -45 19t-19 45v256q0 26 19 45t45 19h256zM1216 768q26 0 45 -19t19 -45v-256q0 -26 -19 -45t-45 -19h-256q-26 0 -45 19t-19 45v256q0 26 19 45t45 19h256zM1536 640v-128h-224v128h224zM1536 1152v-128h-864v128h864z"/></svg><span>设置进度</span></li>
<li><svg class="fa" viewBox="0 0 2048 1792" style="width:18.63px;height:16.30px;vertical-align:-0.143em;margin-right:16.3px"><path transform="translate(0,1536) scale(1,-1)" d="M2048 0v-128h-2048v1536h128v-1408h1920zM1920 1248v-435q0 -21 -19.5 -29.5t-35.5 7.5l-121 121l-633 -633q-10 -10 -23 -10t-23 10l-233 233l-416 -416l-192 192l585 585q10 10 23 10t23 -10l233 -233l464 464l-121 121q-16 16 -7.5 35.5t29.5 19.5h435q14 0 23 -9
t9 -23z"/></svg><span>流水记录</span></li>
<li><svg class="fa" viewBox="0 0 1664 1792" style="width:15.14px;height:16.30px;vertical-align:-0.143em;margin-right:16.3px"><path transform="translate(0,1536) scale(1,-1)" d="M1190 955l293 293l-107 107l-293 -293zM1637 1248q0 -27 -18 -45l-1286 -1286q-18 -18 -45 -18t-45 18l-198 198q-18 18 -18 45t18 45l1286 1286q18 18 45 18t45 -18l198 -198q18 -18 18 -45zM286 1438l98 -30l-98 -30l-30 -98l-30 98l-98 30l98 30l30 98zM636 1276
l196 -60l-196 -60l-60 -196l-60 196l-196 60l196 60l60 196zM1566 798l98 -30l-98 -30l-30 -98l-30 98l-98 30l98 30l30 98zM926 1438l98 -30l-98 -30l-30 -98l-30 98l-98 30l98 30l30 98z"/></svg><span>冻结/解冻</span></li>
<li><svg class="fa" viewBox="0 0 1664 1792" style="width:15.14px;height:16.30px;vertical-align:-0.143em;margin-right:16.3px"><path transform="translate(0,1536) scale(1,-1)" d="M1190 955l293 293l-107 107l-293 -293zM1637 1248q0 -27 -18 -45l-1286 -1286q-18 -18 -45 -18t-45 18l-198 198q-18 18 -18 45t18 45l1286 1286q18 18 45 18t45 -18l198 -198q18 -18 18 -45zM286 1438l98 -30l-98 -30l-30 -98l-30 98l-98 30l98 30l30 98zM636 1276
l196 -60l-196 -60l-60 -196l-60 196l-196 60l196 60l60 196zM1566 798l98 -30l-98 -30l-30 -98l-30 98l-98 30l98 30l30 98zM926 1438l98 -30l-98 -30l-30 -98l-30 98l-98 30l98 30l30 98z"/></svg><span>身份转化</span></li>
<li><svg class="fa" viewBox="0 0 1792 1792" style="width:16.30px;height:16.30px;vertical-align:-0.143em;margin-right:16.3px"><path transform="translate(0,1536) scale(1,-1)" d="M836 367l-15 -368l-2 -22l-420 29q-36 3 -67 31.5t-47 65.5q-11 27 -14.5 55t4 65t12 55t21.5 64t19 53q78 -12 509 -28zM449 953l180 -379l-147 92q-63 -72 -111.5 -144.5t-72.5 -125t-39.5 -94.5t-18.5 -63l-4 -21l-190 357q-17 26 -18 56t6 47l8 18q35 63 114 188
l-140 86zM1680 436l-188 -359q-12 -29 -36.5 -46.5t-43.5 -20.5l-18 -4q-71 -7 -219 -12l8 -164l-230 367l211 362l7 -173q170 -16 283 -5t170 33zM895 1360q-47 -63 -265 -435l-317 187l-19 12l225 356q20 31 60 45t80 10q24 -2 48.5 -12t42 -21t41.5 -33t36 -34.5
t36 -39.5t32 -35zM1550 1053l212 -363q18 -37 12.5 -76t-27.5 -74q-13 -20 -33 -37t-38 -28t-48.5 -22t-47 -16t-51.5 -14t-46 -12q-34 72 -265 436l313 195zM1407 1279l142 83l-220 -373l-419 20l151 86q-34 89 -75 166t-75.5 123.5t-64.5 80t-47 46.5l-17 13l405 -1
q31 3 58 -10.5t39 -28.5l11 -15q39 -61 112 -190z"/></svg><span>清除时间</span></li>
<li><svg class="fa" viewBox="0 0 1664 1792" style="width:15.14px;height:16.30px;vertical-align:-0.143em;margin-right:16.3px"><path transform="translate(0,1536) scale(1,-1)" d="M1190 955l293 293l-107 107l-293 -293zM1637 1248q0 -27 -18 -45l-1286 -1286q-18 -18 -45 -18t-45 18l-198 198q-18 18 -18 45t18 45l1286 1286q18 18 45 18t45 -18l198 -198q18 -18 18 -45zM286 1438l98 -30l-98 -30l-30 -98l-30 98l-98 30l98 30l30 98zM636 1276
l196 -60l-196 -60l-60 -196l-60 196l-196 60l196 60l60 196zM1566 798l98 -30l-98 -30l-30 -98l-30 98l-98 30l98 30l30 98zM926 1438l98 -30l-98 -30l-30 -98l-30 98l-98 30l98 30l30 98z"/></svg><span>删除用户</span></li>
</ul>
</body></html>
